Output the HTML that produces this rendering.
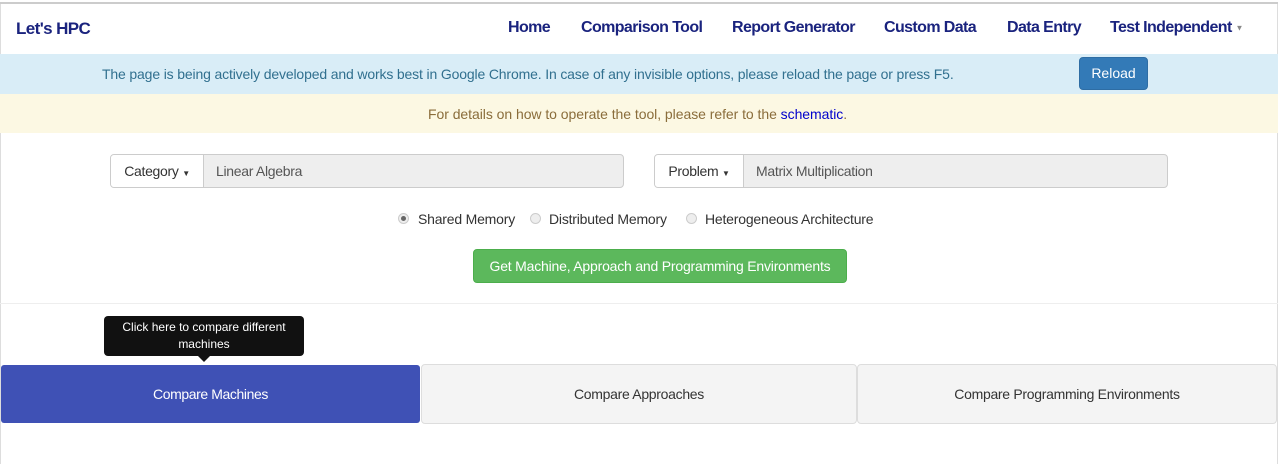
<!DOCTYPE html>
<html><head><style>
body{margin:0;width:1278px;height:464px;background:#fff;font-family:"Liberation Sans",sans-serif;position:relative;overflow:hidden;color:#333}
.a{position:absolute;white-space:nowrap}
.nav{color:#1a237e;font-size:16px;top:19px;font-weight:bold;letter-spacing:-0.6px}
.radio{width:11px;height:11px;border-radius:50%;border:1px solid #ccc;background:#eee;top:213px;box-sizing:border-box}
</style></head><body>
<div class="a" style="left:0;top:2px;width:1278px;height:2px;background:#ccc"></div>
<div class="a" style="left:0;top:4px;width:1px;height:460px;background:#ddd"></div>
<div class="a" style="right:0;top:4px;width:1px;height:460px;background:#ddd"></div>
<div class="a nav" style="left:16px;font-size:17px">Let's HPC</div>
<div class="a nav" style="left:508px">Home</div>
<div class="a nav" style="left:581px">Comparison Tool</div>
<div class="a nav" style="left:732px">Report Generator</div>
<div class="a nav" style="left:884px">Custom Data</div>
<div class="a nav" style="left:1007px">Data Entry</div>
<div class="a nav" style="left:1110px">Test Independent <span style="font-size:8px;color:#888;vertical-align:middle;font-weight:normal">▼</span></div>
<div class="a" style="left:0;top:54px;width:1278px;height:40px;background:#d9edf7"></div>
<div class="a" style="left:102px;top:66px;font-size:14px;color:#31708f;letter-spacing:-0.15px">The page is being actively developed and works best in Google Chrome. In case of any invisible options, please reload the page or press F5.</div>
<div class="a" style="left:1079px;top:57px;width:69px;height:33px;background:#337ab7;border:1px solid #2e6da4;border-radius:4px;box-sizing:border-box;color:#fff;font-size:14px;text-align:center;line-height:31px">Reload</div>
<div class="a" style="left:0;top:94px;width:1278px;height:39px;background:#fcf8e3"></div>
<div class="a" style="left:428px;top:106px;font-size:14px;color:#8a6d3b;letter-spacing:-0.05px">For details on how to operate the tool, please refer to the <span style="color:#00c">schematic</span>.</div>
<div class="a" style="left:110px;top:154px;width:514px;height:34px;border:1px solid #ccc;border-radius:4px;box-sizing:border-box;background:#eee;overflow:hidden">
<div style="position:absolute;left:0;top:0;width:92px;height:32px;background:#fff;border-right:1px solid #ccc;font-size:14px;line-height:32px;text-align:center;letter-spacing:-0.3px">Category <span style="font-size:8px">▼</span></div>
<div style="position:absolute;left:105px;top:0;font-size:14px;line-height:32px;color:#555;letter-spacing:-0.3px">Linear Algebra</div></div>
<div class="a" style="left:654px;top:154px;width:514px;height:34px;border:1px solid #ccc;border-radius:4px;box-sizing:border-box;background:#eee;overflow:hidden">
<div style="position:absolute;left:0;top:0;width:88px;height:32px;background:#fff;border-right:1px solid #ccc;font-size:14px;line-height:32px;text-align:center;letter-spacing:-0.3px">Problem <span style="font-size:8px">▼</span></div>
<div style="position:absolute;left:101px;top:0;font-size:14px;line-height:32px;color:#555;letter-spacing:-0.3px">Matrix Multiplication</div></div>
<div class="a radio" style="left:398px"><div style="width:5px;height:5px;border-radius:50%;background:#666;margin:2px"></div></div>
<div class="a" style="left:418px;top:211px;font-size:14px;letter-spacing:-0.2px">Shared Memory</div>
<div class="a radio" style="left:530px"></div>
<div class="a" style="left:549px;top:211px;font-size:14px;letter-spacing:-0.2px">Distributed Memory</div>
<div class="a radio" style="left:686px"></div>
<div class="a" style="left:705px;top:211px;font-size:14px;letter-spacing:-0.2px">Heterogeneous Architecture</div>
<div class="a" style="left:473px;top:249px;width:374px;height:34px;background:#5cb85c;border:1px solid #4cae4c;border-radius:4px;box-sizing:border-box;color:#fff;font-size:14px;text-align:center;line-height:32px;letter-spacing:-0.2px">Get Machine, Approach and Programming Environments</div>
<div class="a" style="left:0;top:303px;width:1278px;height:1px;background:#eee"></div>
<div class="a" style="left:104px;top:316px;width:200px;height:40px;background:#111;border-radius:4px;color:#fff;font-size:12px;text-align:center;line-height:17px;padding-top:3px;box-sizing:border-box;white-space:normal">Click here to compare different machines</div>
<div class="a" style="left:198px;top:356px;width:0;height:0;border-left:6px solid transparent;border-right:6px solid transparent;border-top:6px solid #111"></div>
<div class="a" style="left:1px;top:365px;width:419px;height:58px;background:#3f51b5;border-radius:3px;color:#fff;font-size:14px;text-align:center;line-height:58px;letter-spacing:-0.4px">Compare Machines</div>
<div class="a" style="left:421px;top:364px;width:436px;height:60px;background:#f4f4f4;border:1px solid #ddd;border-radius:4px;box-sizing:border-box;font-size:14px;text-align:center;line-height:58px;letter-spacing:-0.3px">Compare Approaches</div>
<div class="a" style="left:857px;top:364px;width:420px;height:60px;background:#f4f4f4;border:1px solid #ddd;border-radius:4px;box-sizing:border-box;font-size:14px;text-align:center;line-height:58px;letter-spacing:-0.3px">Compare Programming Environments</div>
</body></html>
